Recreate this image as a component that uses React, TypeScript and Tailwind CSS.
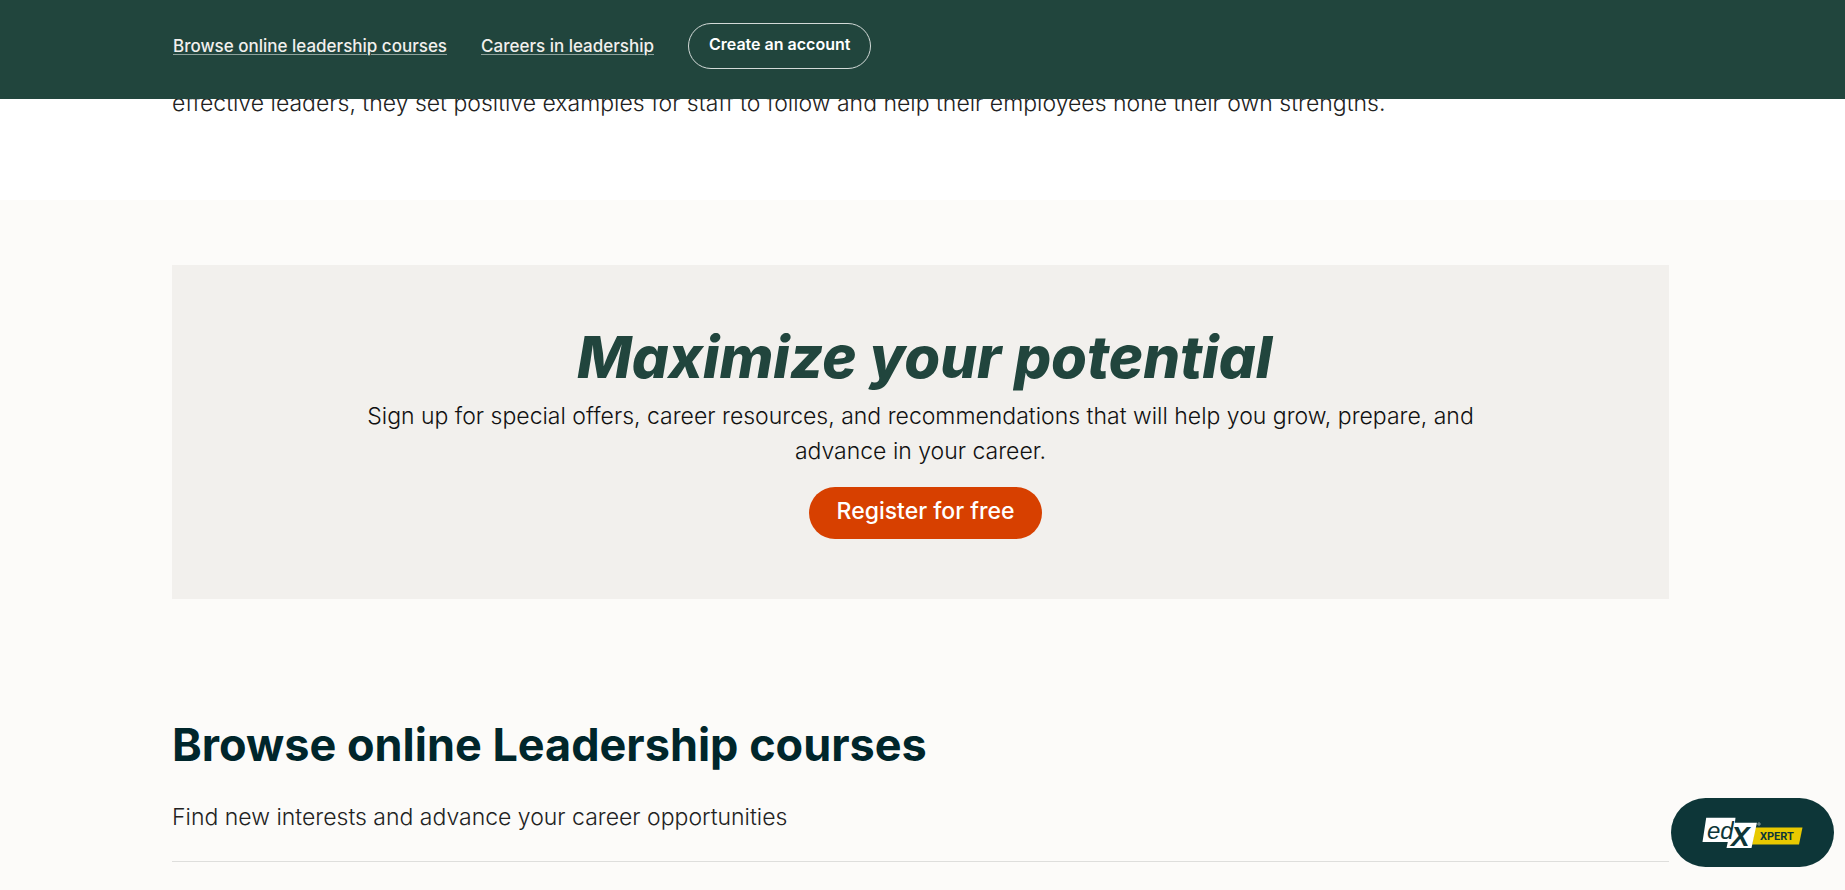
const NAV_LINKS = [
  { label: "Browse online leadership courses", href: "#courses" },
  { label: "Careers in leadership", href: "#careers" },
];

export default function App() {
  return (
    <div className="min-h-screen bg-[#fcfbf9] font-['Inter',sans-serif]">
      <StickyNav />

      <main>
        {/* Intro copy */}
        <section id="careers" className="bg-white pt-[86px] pb-[79px] pl-[172px] pr-[176px]">
          <p className="text-[23px] leading-[35px] font-light text-[#222222]">
            effective leaders, they set positive examples for staff to follow and help their employees hone their own
            strengths.
          </p>
        </section>

        {/* Sign up */}
        <section className="pt-[65px] pl-[172px] pr-[176px]">
          <div className="bg-[#f2f0ed] px-48 pt-14 pb-[60px] text-center">
            <h2 className="pl-2 text-[58px] leading-[72px] font-extrabold italic text-[#21453d]">
              Maximize your potential
            </h2>
            <p className="mt-1.5 text-[23px] leading-[35px] font-light text-[#111111]">
              Sign up for special offers, career resources, and recommendations that will help you grow, prepare, and
              advance in your career.
            </p>
            <button
              type="button"
              className="mt-[18px] ml-2.5 h-[52px] rounded-full bg-[#d74000] px-7 pb-1 text-[23px] font-medium text-white"
            >
              Register for free
            </button>
          </div>
        </section>

        {/* Courses */}
        <section id="courses" className="pt-[118px] pb-6 pl-[172px] pr-[176px]">
          <h2 className="text-[45px] leading-[56px] font-bold text-[#00262b]">Browse online Leadership courses</h2>
          <p className="mt-[27px] text-[23px] leading-[35px] font-light text-[#222222]">
            Find new interests and advance your career opportunities
          </p>
          <hr className="mt-[26px] border-[#dededc]" />
        </section>
      </main>

      <XpertButton />
    </div>
  );
}

function StickyNav() {
  return (
    <header className="fixed inset-x-0 top-0 z-10 bg-[#21453d]">
      <nav className="flex items-center gap-[34px] pt-[23px] pb-[30px] pl-[173px] pr-[176px]">
        {NAV_LINKS.map((link) => (
          <a
            key={link.href}
            href={link.href}
            className="text-[17px] leading-6 font-medium text-[#f2f0ed] underline decoration-[#8fa29d] decoration-1 underline-offset-2"
          >
            {link.label}
          </a>
        ))}
        <button
          type="button"
          className="h-[46px] rounded-full border border-[#d3dad8] px-5 pb-1 text-base font-semibold text-white"
        >
          Create an account
        </button>
      </nav>
    </header>
  );
}

function XpertButton() {
  return (
    <button
      type="button"
      aria-label="Open edX Xpert"
      className="fixed right-[11px] bottom-[23px] z-10 flex h-[69px] w-[163px] items-center justify-center rounded-full bg-[#0d3638]"
    >
      <svg width="104" height="36" viewBox="1 1 104 36" aria-hidden="true">
        <path d="M55 13.5h47.5L99 30.5H52z" fill="#e8c900" />
        <path d="M6.2 3.8h29.3l-.6 5h22L51.5 34h-25l1.3-6H2.5z" fill="#fff" />
        <g fontFamily="'Liberation Sans', sans-serif" fontStyle="italic" fill="#0d3638">
          <text x="7" y="25" fontSize="24">
            ed
          </text>
          <text x="31" y="32" fontSize="28" fontWeight="700">
            X
          </text>
        </g>
        <circle cx="59" cy="10" r="1.2" fill="none" stroke="#fff" strokeWidth="0.5" />
        <text x="60" y="26" fontFamily="Roboto, sans-serif" fontSize="11" fontWeight="700" fill="#0d3638">
          XPERT
        </text>
      </svg>
    </button>
  );
}
